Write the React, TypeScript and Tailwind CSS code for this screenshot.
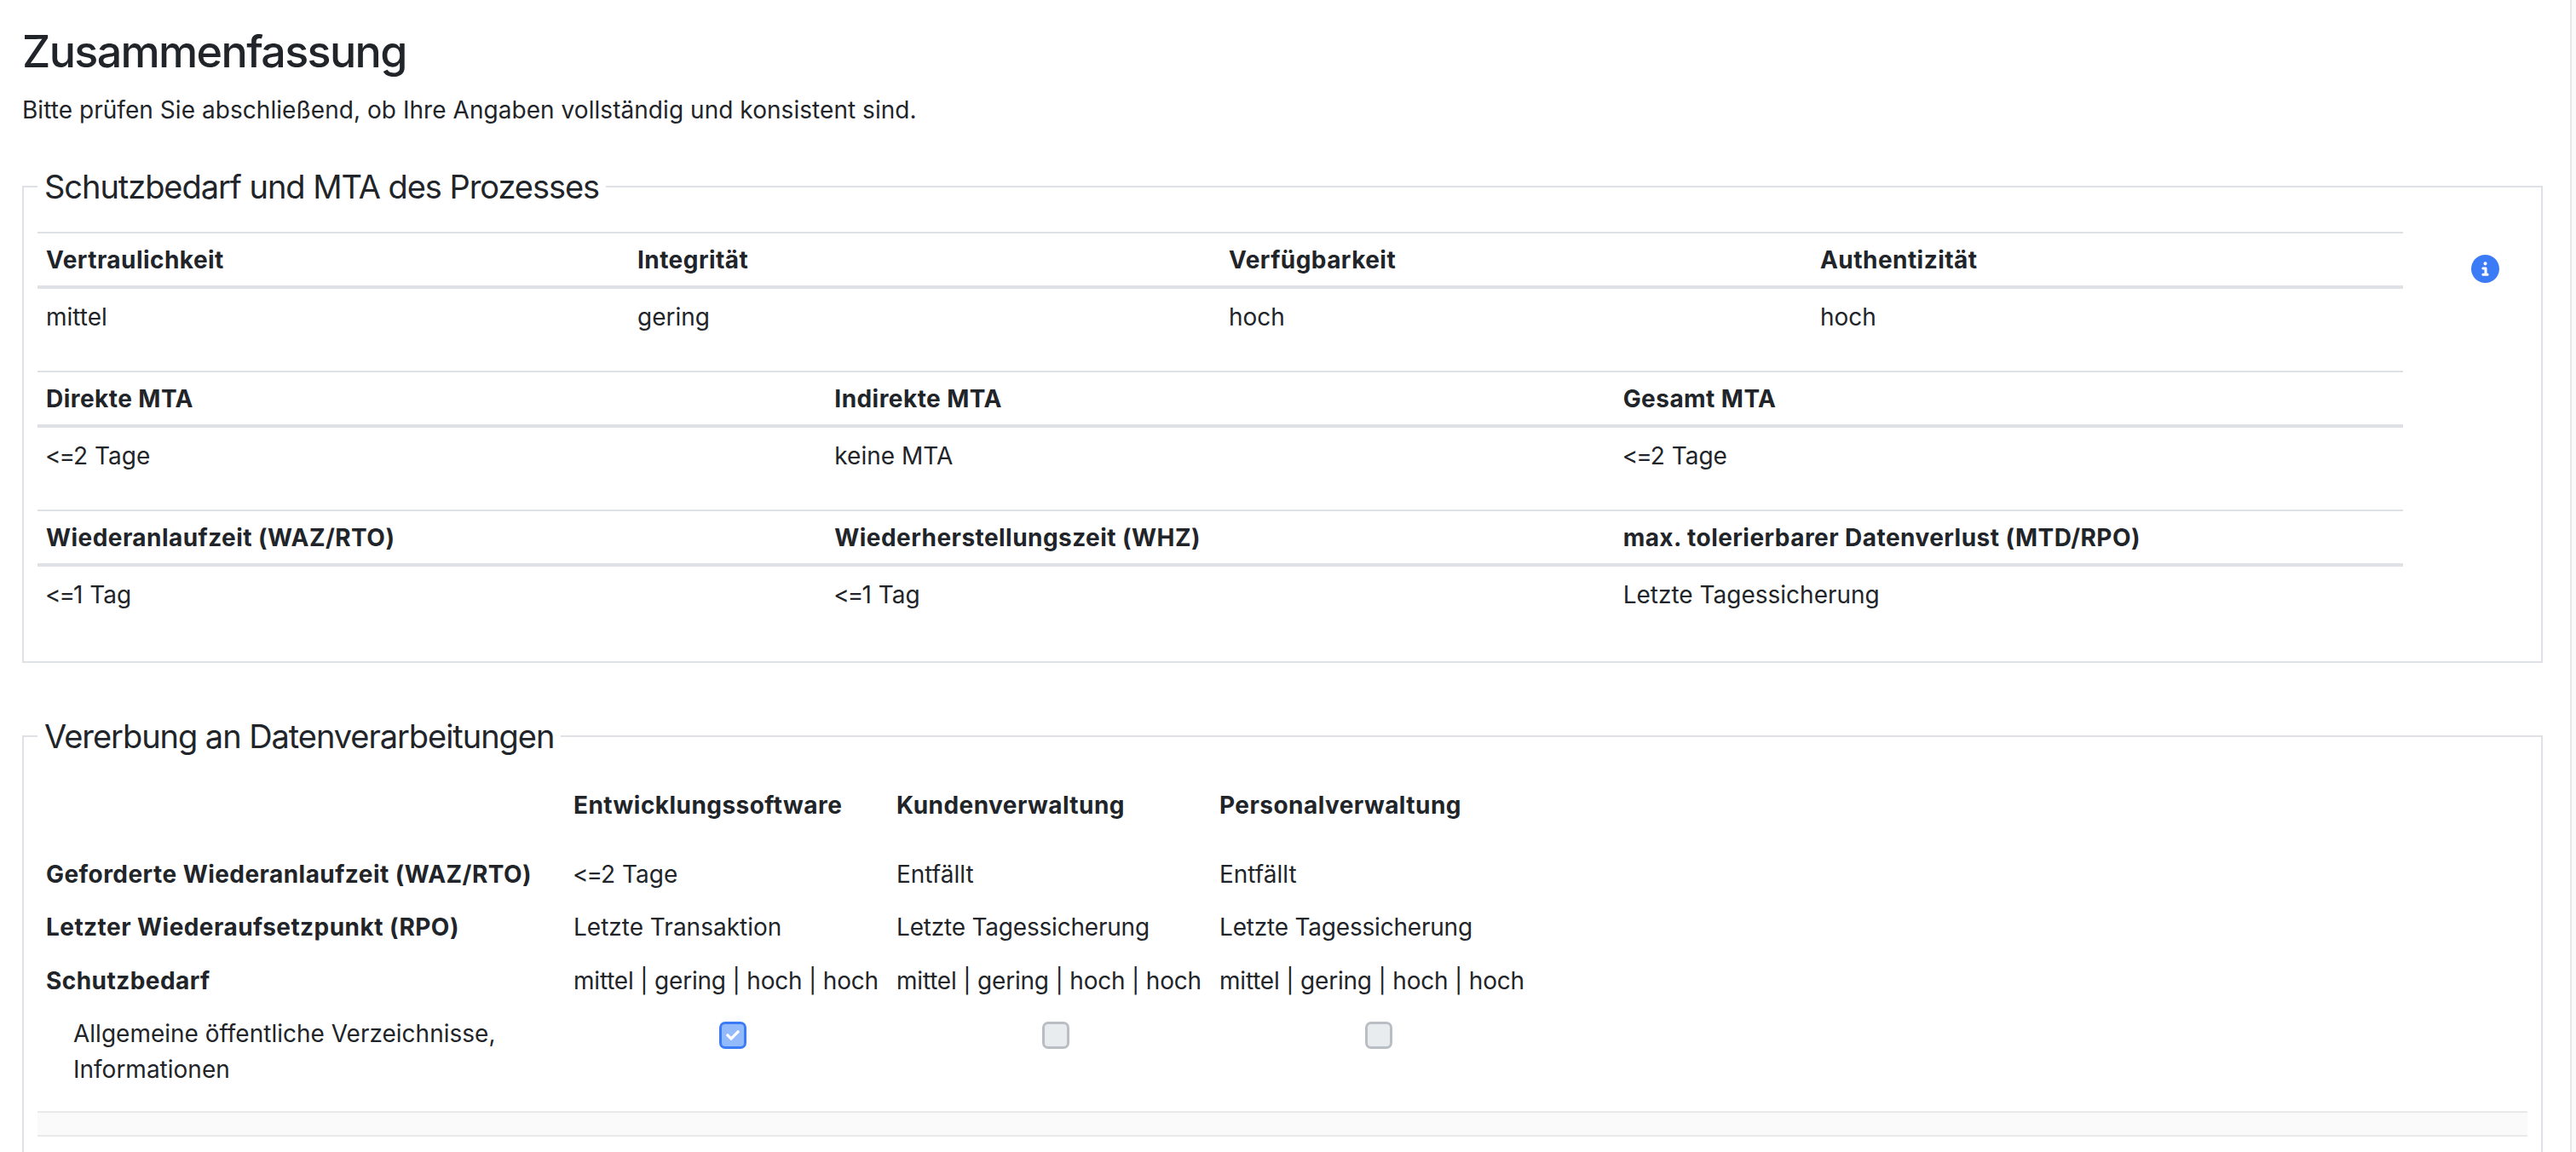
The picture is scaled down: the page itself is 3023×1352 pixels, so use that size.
import { FaCheck } from "react-icons/fa";
import { FaCircleInfo } from "react-icons/fa6";

const cell = "px-[10px] py-[10.25px] text-[28px] leading-[42px]";
const boldCell = "px-[10px] py-[10.25px] text-[28px] leading-[42px] font-bold tracking-[0.45px]";
const tightCell = "px-[10px] py-[10.25px] text-[28px] leading-[42px] whitespace-nowrap tracking-[-0.2px]";

type SummaryTableProps = {
  cols: string;
  rows: string[][];
};

// "<=" sits tighter in the original than Inter sets it here
function Value({ text }: { text: string }) {
  if (text.startsWith("<=")) {
    return (
      <>
        <span className="tracking-[-2px] -ml-[1px]">&lt;=</span>
        {text.slice(2)}
      </>
    );
  }
  return <>{text}</>;
}

function SummaryTable({ cols, rows }: SummaryTableProps) {
  return (
    <div className="mb-[34px]">
      <div className={`grid ${cols} border-t-2 border-b-4 border-[#dee2e6] font-bold tracking-[0.45px] h-[67px]`}>
        {rows[0].map((label) => (
          <div key={label} className="px-[10px] pt-[10px] text-[28px] leading-[42px]">{label}</div>
        ))}
      </div>
      <div className={`grid ${cols} h-[62px]`}>
        {rows[1].map((value, index) => (
          <div key={index} className="px-[10px] pt-[12px] text-[28px] leading-[42px]"><Value text={value} /></div>
        ))}
      </div>
    </div>
  );
}

function Checkbox({ checked }: { checked?: boolean }) {
  if (checked) {
    return (
      <div className="w-[32px] h-[32px] rounded-[7px] border-[3px] border-[#3b7cf6] bg-[#93bbfb] flex items-center justify-center text-white">
        <FaCheck size={16} />
      </div>
    );
  }
  return <div className="w-[32px] h-[32px] rounded-[7px] border-[3px] border-[#b9bec5] bg-[#e9ecef]" />;
}

const inheritanceCols = "grid-cols-[619px_379px_379px_379px]";
const protection = "mittel | gering | hoch | hoch";

export default function App() {
  return (
    <div className="flex h-[1352px] overflow-hidden bg-white text-[#212529] font-['Inter',sans-serif] [font-feature-settings:'calt'_0]">
      <main className="flex-1 pl-[26px] pr-[32px] pt-[32px]">
        <h1 className="text-[52px] leading-[58px] font-medium tracking-[-1.65px] mb-[18px]">Zusammenfassung</h1>
        <p className="text-[28px] leading-[42px] tracking-[0.05px] mb-[41px]">
          Bitte prüfen Sie abschließend, ob Ihre Angaben vollständig und konsistent sind.
        </p>

        <fieldset className="border-2 border-[#dee2e6] px-[16px] pb-[15px] mb-[58px]">
          <legend className="px-[8px] text-[38px] leading-[56px] tracking-[-1.05px]">Schutzbedarf und MTA des Prozesses</legend>
          <div className="flex mt-[25px]">
            <div className="w-[2776px]">
              <SummaryTable
                cols="grid-cols-4"
                rows={[
                  ["Vertraulichkeit", "Integrität", "Verfügbarkeit", "Authentizität"],
                  ["mittel", "gering", "hoch", "hoch"],
                ]}
              />
              <SummaryTable
                cols="grid-cols-3"
                rows={[
                  ["Direkte MTA", "Indirekte MTA", "Gesamt MTA"],
                  ["<=2 Tage", "keine MTA", "<=2 Tage"],
                ]}
              />
              <SummaryTable
                cols="grid-cols-3"
                rows={[
                  ["Wiederanlaufzeit (WAZ/RTO)", "Wiederherstellungszeit (WHZ)", "max. tolerierbarer Datenverlust (MTD/RPO)"],
                  ["<=1 Tag", "<=1 Tag", "Letzte Tagessicherung"],
                ]}
              />
            </div>
            <div className="pl-[80px] pt-[27px]">
              <FaCircleInfo size={33} className="text-[#3b7cf6]" />
            </div>
          </div>
        </fieldset>

        <fieldset className="border-2 border-[#dee2e6] px-[16px] h-[600px]">
          <legend className="px-[8px] text-[38px] leading-[56px] tracking-[-1.05px]">Vererbung an Datenverarbeitungen</legend>
          <div className="mt-[22px]">
            <div className={`grid ${inheritanceCols} mb-[18px]`}>
              <div className={boldCell} />
              <div className={boldCell}>Entwicklungssoftware</div>
              <div className={boldCell}>Kundenverwaltung</div>
              <div className={boldCell}>Personalverwaltung</div>
            </div>
            <div className={`grid ${inheritanceCols}`}>
              <div className={boldCell}>Geforderte Wiederanlaufzeit (WAZ/RTO)</div>
              <div className={cell}><Value text="<=2 Tage" /></div>
              <div className={cell}>Entfällt</div>
              <div className={cell}>Entfällt</div>
              <div className={boldCell}>Letzter Wiederaufsetzpunkt (RPO)</div>
              <div className={cell}>Letzte Transaktion</div>
              <div className={tightCell}>Letzte Tagessicherung</div>
              <div className={tightCell}>Letzte Tagessicherung</div>
              <div className={boldCell}>Schutzbedarf</div>
              <div className={tightCell}>{protection}</div>
              <div className={tightCell}>{protection}</div>
              <div className={tightCell}>{protection}</div>
              <div className={`${cell} pl-[42px]`}>Allgemeine öffentliche Verzeichnisse, Informationen</div>
              <div className="pl-[181px] pt-[17px]"><Checkbox checked /></div>
              <div className="pl-[181px] pt-[17px]"><Checkbox /></div>
              <div className="pl-[181px] pt-[17px]"><Checkbox /></div>
            </div>
            <div className="mt-[17px] h-[30px] border-y-2 border-[#e9e9e9] bg-[#fafafa]" />
          </div>
        </fieldset>
      </main>
      <aside className="w-[7px] border-l-2 border-[#e8e8e8] bg-[#fafafa]" />
    </div>
  );
}
